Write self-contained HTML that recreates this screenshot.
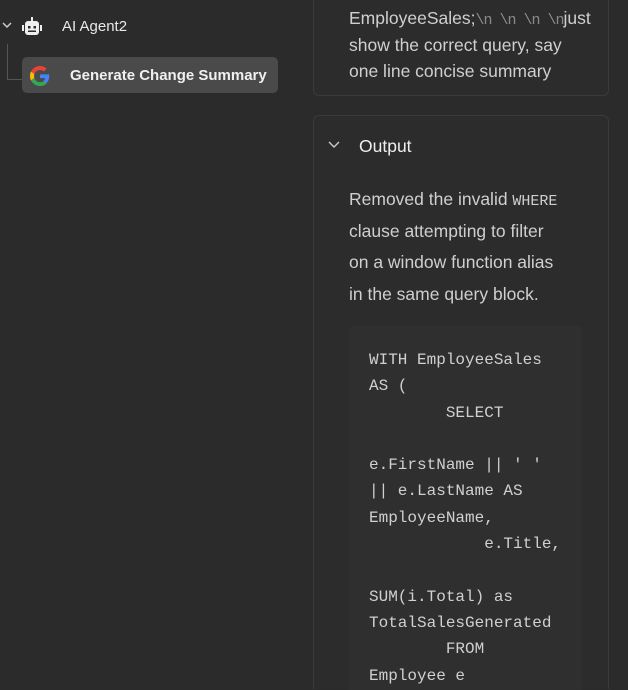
<!DOCTYPE html>
<html style="overflow:hidden;height:690px"><head><style>
body{margin:0;width:628px;height:690px;background:#2b2b2b;overflow:hidden;font-family:"Liberation Sans",sans-serif;position:relative;color:#d4d4d4}
.a{position:absolute}
.card{position:absolute;border:1px solid #3a3a3a;border-radius:6px;background:#2c2c2c}
.txt{font-size:17.5px;color:#cfcfcf}
code,.mono{font-family:"Liberation Mono",monospace;line-height:0}
pre{margin:0;font-family:"Liberation Mono",monospace;font-size:16px;line-height:26.3px;color:#d0d0d0}
</style></head><body>
<svg class="a" style="left:1px;top:19px" width="12" height="12" viewBox="0 0 12 12"><path d="M2 4l4 4 4-4" stroke="#ccc" stroke-width="1.5" fill="none"/></svg>
<svg class="a" style="left:21px;top:17px" width="22" height="20" viewBox="0 0 22 20"><rect x="10" y="0" width="2" height="4" fill="#eee"/><rect x="4" y="4" width="14" height="14" rx="3" fill="#eee"/><rect x="1" y="8" width="2" height="6" fill="#eee"/><rect x="19" y="8" width="2" height="6" fill="#eee"/><rect x="7" y="9" width="2.5" height="2.5" fill="#2b2b2b"/><rect x="12.5" y="9" width="2.5" height="2.5" fill="#2b2b2b"/><rect x="7" y="13.5" width="8" height="1.5" fill="#2b2b2b"/></svg>
<div class="a" style="left:62px;top:18px;font-size:15px;color:#e8e8e8">AI Agent2</div>
<div class="a" style="left:7px;top:44px;width:14px;height:35px;border-left:1.5px solid #555;border-bottom:1.5px solid #555"></div>
<div class="a" style="left:22px;top:57px;width:256px;height:36px;background:#4a4a4a;border-radius:5px"></div>
<svg class="a" style="left:30px;top:66px" width="20" height="20" viewBox="0 0 48 48"><path fill="#EA4335" d="M24 9.5c3.5 0 6.6 1.2 9.1 3.6l6.8-6.8C35.8 2.4 30.2 0 24 0 14.6 0 6.6 5.4 2.6 13.2l7.9 6.2C12.4 13.7 17.7 9.5 24 9.5z"/><path fill="#4285F4" d="M46.1 24.5c0-1.6-.1-3.1-.4-4.5H24v9h12.4c-.5 2.9-2.2 5.3-4.6 7l7.2 5.6c4.2-3.9 7.1-9.6 7.1-17.1z"/><path fill="#FBBC05" d="M10.5 28.6c-.5-1.4-.8-3-.8-4.6s.3-3.2.8-4.6l-7.9-6.2C.9 16.5 0 20.1 0 24s.9 7.5 2.6 10.8l7.9-6.2z"/><path fill="#34A853" d="M24 48c6.5 0 11.9-2.1 15.9-5.8l-7.2-5.6c-2.2 1.5-5 2.4-8.7 2.4-6.3 0-11.6-4.2-13.5-10l-7.9 6.2C6.6 42.6 14.6 48 24 48z"/></svg>
<div class="a" style="left:70px;top:67px;font-size:15px;font-weight:bold;color:#f0f0f0">Generate Change Summary</div>

<div class="card" style="left:313px;top:-10px;width:294px;height:104px"></div>
<div class="a txt" style="left:349px;top:5px;width:275px;line-height:26.5px;white-space:nowrap">EmployeeSales;<span class="mono" style="color:#8a8a8a;font-size:15px;letter-spacing:-1px">\n \n \n \n</span>just<br>show the correct query, say<br>one line concise summary</div>

<div class="card" style="left:313px;top:115px;width:294px;height:573px;border-bottom:none;border-radius:6px 6px 0 0"></div>
<svg class="a" style="left:328px;top:139px" width="12" height="10" viewBox="0 0 12 10"><path d="M1 3l5 5 5-5" stroke="#ccc" stroke-width="1.4" fill="none"/></svg>
<div class="a" style="left:359px;top:136px;font-size:17.5px;color:#eee">Output</div>
<div class="a txt" style="left:349px;top:184px;line-height:31.7px;width:240px">Removed the invalid <code style="font-size:15px">WHERE</code><br>clause attempting to filter<br>on a window function alias<br>in the same query block.</div>
<div class="a" style="left:349px;top:326px;width:233px;height:364px;background:#2f2f2f;border-radius:4px 4px 0 0"></div>
<pre class="a" style="left:369px;top:347px">WITH EmployeeSales
AS (
        SELECT

e.FirstName || ' '
|| e.LastName AS
EmployeeName,
            e.Title,

SUM(i.Total) as
TotalSalesGenerated
        FROM
Employee e</pre>
</body></html>
